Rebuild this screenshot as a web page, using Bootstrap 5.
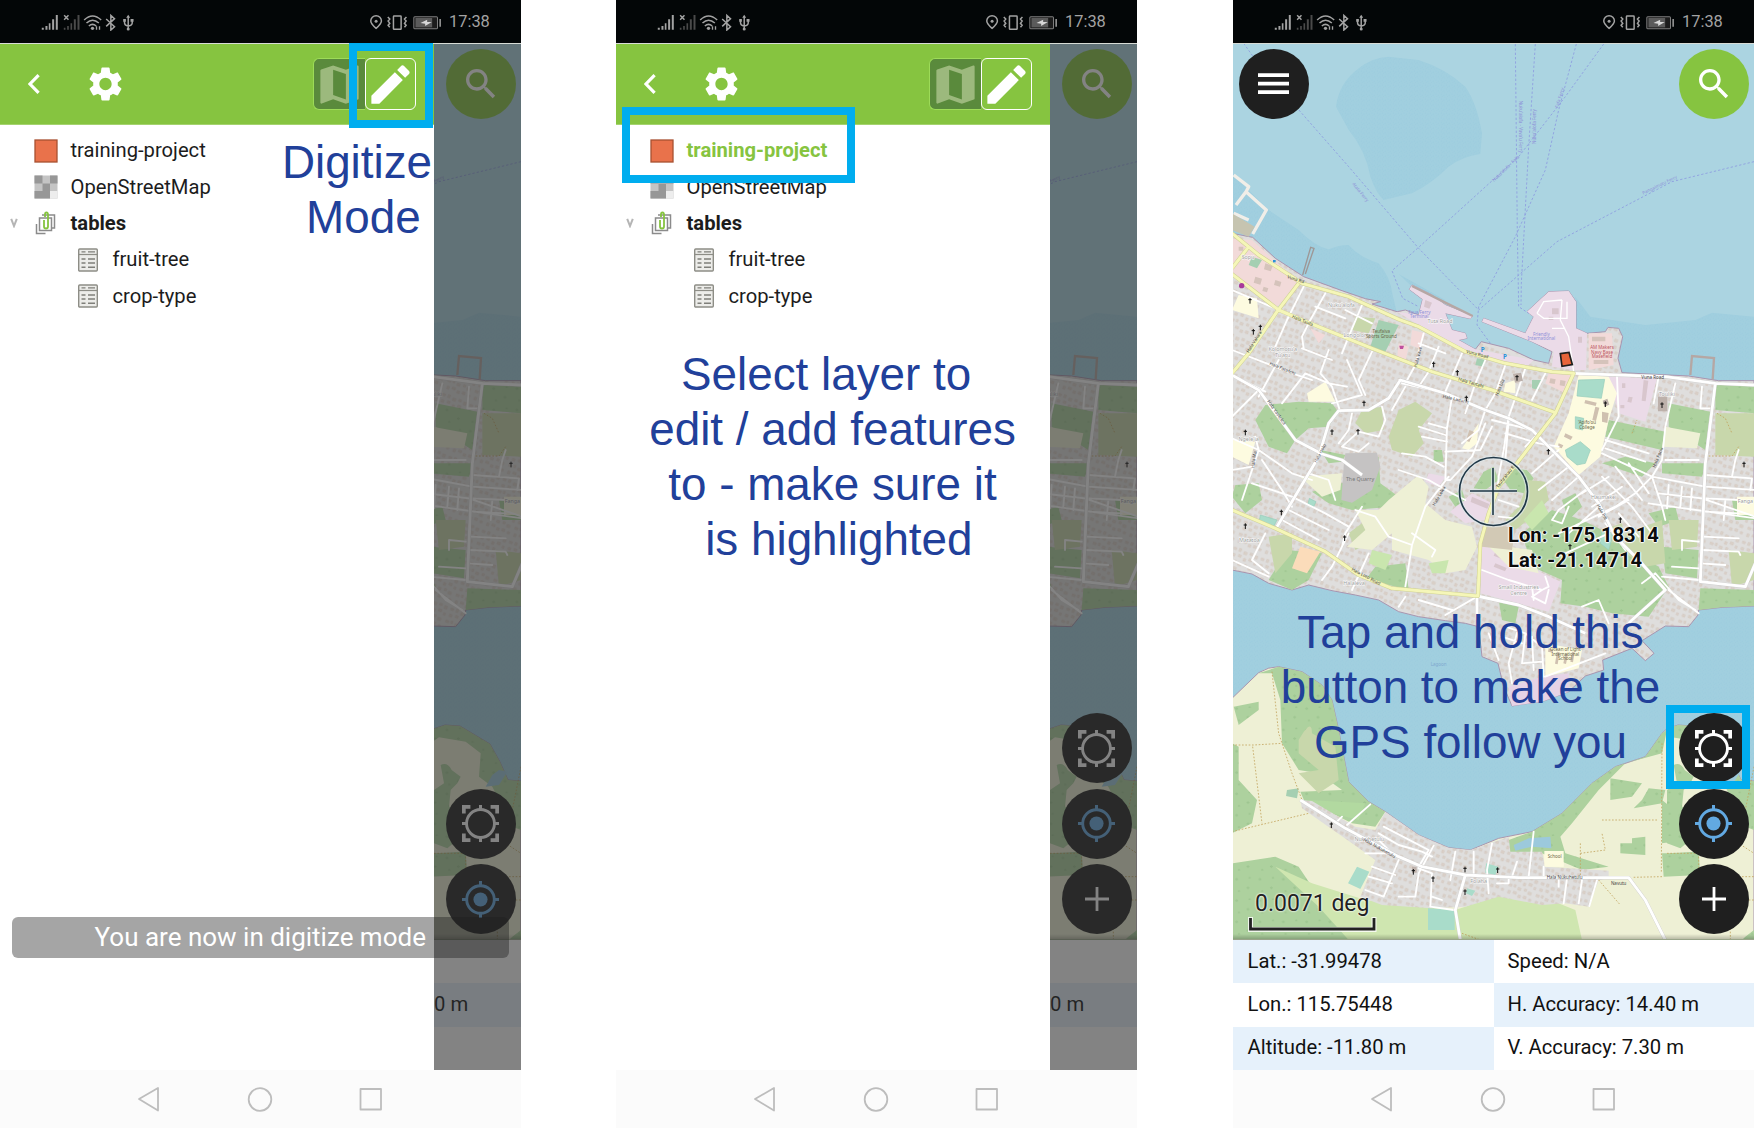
<!DOCTYPE html>
<html lang="en">
<head>
<meta charset="utf-8">
<meta name="viewport" content="width=device-width, initial-scale=1">
<title>Digitize mode guide</title>
<link href="https://cdn.jsdelivr.net/npm/bootstrap@5.3.0/dist/css/bootstrap.min.css" rel="stylesheet">
<style>
body{font-family:Roboto,"Liberation Sans",sans-serif;background:#fff;color:#1c1c1c;overflow:hidden}
.stage{width:1754px;height:1129px;gap:95px}
.phone{width:521px;height:1128px;flex:none}
.phone:last-child{margin-left:1px}
.statusbar{height:43px;background:#030607;color:#a3a3a3;padding:1px 33px 0 40px;flex:none;font-size:16.4px}
.statusbar .clock{width:39px;margin-left:6px;line-height:18px}
.screen{height:1027px;flex:none;border-top:1px solid #d8dcd6}
.drawer{width:434px;background:#fff;flex:none}
.drawer-head{height:81px;background:#86c440;border-bottom:1px solid #a5d36f;padding:0 18px 0 28px}
.gear{margin-left:45px}
.modes{width:103px;height:52px}
.mode-off{width:52px;background:#5a8a3c;border:1px solid #9ddb58;border-right:0;border-radius:6px 0 0 6px;color:#9cb97d}
.mode-on{width:51px;background:#86c440;border:1.5px solid #fff;border-radius:6px;color:#fff}
.tree{padding-top:7.5px;font-size:20.2px}
.tree-row{height:36.3px}
.tree-row span{padding-bottom:.5px;line-height:24px}
.caret{width:34px;padding-left:10px;flex:none}
.ico{width:24px;flex:none;margin-right:12.5px}
.child .ico{margin-left:42px}
.picked{color:#86c440;font-weight:700}
.strip{width:87px;flex:none;overflow:hidden}
.shade{inset:0;background:rgba(49,49,49,.6)}
.mapbox{height:896px;flex:none;overflow:hidden;border-bottom:1px solid #9aa58a}
.mapbox>svg{display:block}
.foot-shadow{left:0;right:0;bottom:0;height:5px;background:linear-gradient(rgba(0,0,0,0),rgba(0,0,0,.22))}
.fab{width:70px;height:70px;border-radius:50%;background:#1f1f1f}
.fab-go{background:#86c440}
.at-top{top:5px}
.at-right{right:5.5px}
.at-left{left:5.5px}
.fabs{bottom:5px;gap:5.4px}
.info{font-size:20.25px;color:#111;line-height:24px}
.info .cellx{height:43.4px;width:50%;padding:0 0 2px 14.5px;white-space:nowrap}
.info .cellx:last-child{padding-left:14px}
.tint{background:#e6f1fb}
.strip .info .cellx{width:100%;padding-left:0}
.navkeys{height:58px;background:#fbfbfb;flex:none}
.note{font-family:"Liberation Sans",Arial,sans-serif;font-size:45.8px;line-height:55px;color:#21409a;white-space:pre;text-align:center;z-index:5}
.frame{border:8.5px solid #00adef;z-index:4}
.n1{left:257px;width:200px;top:134.5px}
.n2{left:16px;width:401px;top:346.5px}
.n3{left:37px;width:401px;top:604.5px}
.f1{left:349px;top:43px;width:84px;height:85px}
.f2{left:6px;top:107px;width:233px;height:76px}
.f3{left:433px;top:705px;width:84px;height:84px}
.toastbar{left:11.5px;top:916.5px;width:497.5px;height:41px;border-radius:6px;background:rgba(29,29,29,.4);color:#fff;font-size:26px;line-height:41px;z-index:4;white-space:nowrap}
.coords{left:275px;top:479px;font-size:20.2px;font-weight:700;line-height:24.6px;color:#0b0b0b;text-shadow:0 0 2px #fff,1px 0 1px #fff,-1px 0 1px #fff,0 1px 1px #fff}
.scalelab{left:22px;top:847px;font-size:23px;line-height:26px;color:#222;text-shadow:0 0 2px #fff,0 0 2px #fff}
.scalebar{left:15px;top:871.5px}
.cross{left:224px;top:411px}
</style>
</head>
<body>

<svg width="0" height="0" class="position-absolute" aria-hidden="true">
<defs>
<pattern id="houses" width="88" height="84" patternUnits="userSpaceOnUse" patternTransform="rotate(22)">
<rect width="88" height="84" fill="#dfdedd"/>
<g fill="#dad0c8" stroke="#d0c3ba" stroke-width="1.2">
<path d="M5 6h9v7h-9zM22 4h7v9h-7zM38 8h10v8h-10zM57 5h8v7h-8zM73 7h9v9h-9zM8 25h8v8h-8zM26 22h9v7h-9zM44 27h7v9h-7zM60 22h10v8h-10zM78 28h6v7h-6zM4 45h10v7h-10zM20 42h6v8h-6zM34 46h9v8h-9zM53 43h7v7h-7zM67 47h10v8h-10zM9 65h7v9h-7zM25 62h10v7h-10zM42 67h8v8h-8zM58 64h9v8h-9zM76 66h7v7h-7z"/>
</g>
</pattern>
<pattern id="trees" width="70" height="64" patternUnits="userSpaceOnUse">
<rect width="70" height="64" fill="#add19e"/>
<path d="M10 14q4-7 8 0zM14 14v4M44 40q4-7 8 0zM48 40v4M50 10q3-5 6 0zM18 50q3-5 6 0z" fill="none" stroke="#93bd86" stroke-width="1.6"/>
</pattern>
<pattern id="ripple" width="16" height="14" patternUnits="userSpaceOnUse">
<rect width="16" height="14" fill="#a1cfdf"/>
<path d="M2 3h3M10 6h3M5 10h2M13 12h2" stroke="#93c5db" stroke-width="1.5"/>
</pattern>
<path id="ch" d="M0-8V9M-5-3H5" fill="none" stroke="#111" stroke-width="3"/>

<g id="tonga">
<rect x="0" y="128" width="1570" height="2700" fill="#abd4e1"/>
<g fill="url(#ripple)">
<path d="M380 205Q420 172 470 170L560 180Q640 205 700 260Q735 310 750 400L745 462Q690 470 650 500Q600 550 540 580L455 600Q432 580 415 530Q400 450 350 390L312 320Q320 250 380 205Z"/>
<path d="M0 520L110 630L200 690Q250 740 290 748Q320 735 350 735Q380 770 440 790Q475 830 482 885L500 960H0Z"/>
<path d="M500 822L640 900L590 920L540 860Z"/>
<path d="M1030 890L1075 950L1240 975L1390 960L1440 938L1566 950V1180H1030Z"/>
<path d="M0 1640H1570V2700H0Z"/>
</g>
<!-- main island -->
<path d="M0 700L62 712L130 775L215 830L330 872L400 896L446 905L420 912L495 935L520 930L560 945L572 898L532 868L540 855L600 885L640 915L722 948L715 956L640 940L660 990L700 1000L705 1015L680 1020L730 1048L748 1025L830 1045L905 1080L950 1090L960 1055L900 1025L750 965L755 955L880 1000L905 950L885 935L950 875L1010 873L1032 905L1032 985L1065 1000L1120 995L1128 982L1160 985L1172 1010L1158 1075L1170 1118L1370 1128L1460 1142L1566 1142V1818L1470 1822L1400 1830L1398 1845L1370 1880L1300 1878L1230 1922L1266 1960L1240 1982L1200 1945L1112 1980L1115 2010L1060 2028L1010 2075L930 2105L875 2112L840 2118L815 2060L798 1990L750 1970L740 1880L700 1870L640 1862L560 1850L500 1835L440 1800L370 1785L300 1772L230 1755L180 1770L110 1750L60 1722L0 1710Z" fill="url(#houses)" stroke="#a895b0" stroke-width="3"/>
<!-- southern shore -->
<path d="M0 2095L80 2018Q110 2000 140 2000L210 2015L270 2055L300 2100L320 2190L350 2345L410 2405L460 2435L560 2505L650 2543L715 2550L800 2515L900 2495L990 2440L1080 2350L1150 2300L1240 2270L1290 2200L1305 2186L1338 2175L1383 2178L1473 2232L1503 2286L1527 2340L1566 2343V2830H0Z" fill="#eef0d5" stroke="#a895b0" stroke-width="3"/>
<!-- waterfront districts -->
<g fill="#f2dad9"><path d="M0 715L60 720L205 850L130 925L0 820ZM540 990L580 1000L560 1045L535 1035ZM500 1030L530 1040L520 1085L495 1075ZM950 1120L1020 1125L1000 1180L940 1150ZM1070 1000L1140 1000L1145 1095L1070 1110ZM235 985L280 1005L260 1030Z"/></g>
<g fill="#d5c3bb"><path d="M20 740h14v12h-14zM100 790l22 8-6 16-20-6zM70 830l20 6-5 18-20-6zM130 840l18 6-4 14-18-5zM95 860l14 5-4 12-14-4zM40 850l10 4-4 9-10-3zM1080 1010h40v14h-40zM1085 1080h44v12h-44zM955 1135l16 3-3 14-16-3zM985 1140l16 3-3 16-15-3z"/></g>
<g fill="#ebdbe8">
<path d="M495 935L560 945L572 898L532 868L540 855L600 885L640 915L722 948L715 956L640 940L660 990L700 1000L705 1015L680 1020L730 1048L905 1080L880 1105L700 1050L560 975ZM885 935L950 875L1010 873L1032 905L1032 985L1065 1000L1062 1110L1030 1110L960 1100L965 1055L900 1025L750 965L755 955L880 1000L905 950Z"/>
<path d="M1130 1130L1275 1135L1240 1265L1160 1240ZM745 1630L985 1745L950 1835L745 1780ZM655 1535L720 1480L780 1510L760 1560L700 1570ZM590 1420L640 1430L620 1460L580 1445Z"/>
<path d="M830 2060L930 2030L1010 2020L1010 2075L930 2105L840 2118Z" fill="#e6d3e6"/>
</g>
<g fill="#d8c6cd"><path d="M1235 1140l14 2-8 62-12-2zM1170 1150h10v14h-10zM1190 1190l12 2-4 16-12-3zM1165 1215h12v10h-12zM720 1490l52 22-6 14-50-20zM790 1655l34 14-5 12-34-14zM790 1690l34 14-5 10-34-14zM960 925h20v18h-20zM580 900l20 8-8 18-16-6zM950 950h14v10h-14zM1038 1010h12v18h-12z"/></g>
<g fill="url(#trees)">
<path d="M100 1215L200 1205L300 1210L318 1235L290 1280L230 1285L190 1320L165 1360L110 1340L70 1260ZM10 1455L80 1450L90 1500L40 1540L0 1490ZM265 1350L340 1365L330 1385L290 1390ZM240 1475L330 1450L440 1370L445 1450L500 1490L480 1520L360 1530L290 1510ZM430 1700L520 1690L530 1770L450 1750L400 1740ZM755 1415L785 1400L800 1440L760 1470L725 1465ZM845 1405L885 1410L905 1435L875 1480L835 1470L815 1440ZM870 1600L960 1530L1050 1560L1130 1600L1180 1640L1280 1700L1310 1760L1250 1850L1140 1840L1060 1820L985 1810L990 1740L900 1700ZM1130 1260L1300 1295L1290 1350L1120 1310ZM1310 1210L1435 1235L1420 1350L1310 1280ZM1450 1155L1570 1155V1240L1450 1230ZM1180 1370L1270 1390L1230 1430L1110 1390ZM1290 1390L1420 1390L1410 1430L1290 1420ZM1290 1640L1400 1650L1395 1735L1300 1720ZM1405 1765L1570 1770V1818L1470 1822L1400 1830ZM1500 1500L1570 1500V1560L1510 1560ZM800 1800L860 1820L850 1870L810 1860ZM165 1650L270 1660L230 1740L180 1770L110 1740ZM990 1500L1030 1480L1050 1520L1010 1560ZM1250 1540L1330 1520L1340 1560L1280 1580ZM605 1350L630 1350L635 1385L605 1385ZM650 1490L690 1470L700 1500L670 1520Z"/>
</g>
<g fill="#c8d7ab">
<path d="M390 1230L450 1220L455 1290L400 1300L370 1270ZM500 1230L550 1205L600 1240L560 1290L575 1330L540 1370L480 1350L470 1310ZM370 950L430 955L410 1000L360 990ZM890 1440L940 1445L950 1500L900 1550L850 1590L820 1560L860 1520ZM1180 1600L1290 1560L1300 1690L1240 1700L1180 1660ZM1450 1240L1566 1240V1370L1450 1365ZM1110 1590L1170 1570L1180 1620L1130 1630ZM1490 1650L1566 1660V1740L1500 1760ZM1310 1560L1400 1560L1395 1640L1320 1650ZM110 1610L180 1600L180 1660L130 1720ZM350 1600L390 1570L450 1610L370 1650Z"/>
</g>
<g fill="#eef0d5">
<path d="M205 1430L330 1420L325 1470L270 1490ZM470 1500L560 1425L590 1460L580 1510L640 1560L720 1580L735 1640L700 1710L640 1720L590 1680L480 1650L480 1600L420 1650L345 1640L400 1590L370 1530L440 1530ZM1300 1280L1405 1300L1395 1345L1290 1340ZM760 1630L900 1650L920 1720L830 1700Z"/>
</g>
<g fill="#fdfbe0">
<path d="M20 885L75 895L80 955L0 930ZM280 1145L310 1205L230 1205L225 1180ZM690 1345L740 1270L735 1330L710 1350ZM1040 1125L1130 1130L1155 1180L1130 1260L1105 1370L1040 1425L965 1340L1010 1240ZM0 1320L70 1325L50 1395L0 1370ZM940 1930L1050 1950L1040 2005L940 2030ZM820 1150L850 1140L850 1180L815 1175ZM937 2555L995 2555L995 2600L937 2600ZM1515 1490H1566V1545H1515Z"/>
</g>
<g fill="#cfc0b0"><path d="M1090 1220l12 3-10 40-11-3zM1060 1200l34 8-3 10-34-8zM1000 1300l22 10-6 10-20-10zM1110 1235l20 4-4 30-16-4zM980 1330l14 6-5 9-12-5zM975 1955l8 2-6 36-8-2zM1000 1960l8 2-6 30-8-2zM1020 1955l8 2-5 30-8-2zM950 1945l14 3-2 10-14-3zM712 1290l14 6-14 30-10-4z"/></g>
<path d="M340 1360L435 1358L445 1400L420 1470L360 1508L328 1500L335 1400Z" fill="#c5c3c3"/>
<path d="M205 1640L265 1655L225 1720L180 1705Z" fill="#fbdcba"/>
<path d="M755 1570L850 1585L840 1650L750 1640Z" fill="#d2c9b5"/>
<g fill="#a9dcca" stroke="#95ccb9" stroke-width="2"><path d="M1040 1140L1118 1138L1108 1195L1035 1188ZM1000 1350L1045 1325L1075 1350L1060 1390L1035 1395L1005 1370ZM85 1545L135 1560L125 1580L82 1565ZM232 1495L252 1505L245 1520L228 1512ZM1110 1590L1145 1600L1130 1650L1105 1630ZM1030 1250L1055 1255L1052 1290L1030 1285Z"/></g>
<g fill="#a5cfb2"><path d="M440 960L500 975L460 1055L415 1040ZM900 1140L930 1140L920 1170L900 1165ZM735 1075L760 1080L755 1100L730 1095ZM60 770L90 780L75 805L50 795Z"/></g>
<g fill="#c9e6ae"><path d="M420 1650L480 1665L460 1710L410 1690ZM875 1560L930 1500L950 1540L900 1590ZM590 1690L650 1680L640 1720L600 1720Z"/></g>
<!-- southern woodland and villages -->
<g fill="url(#trees)">
<path d="M80 2020L140 2000L210 2015L270 2055L300 2100L320 2190L350 2345L410 2405L460 2435L430 2480L360 2470L300 2440L220 2410L205 2375L330 2370L260 2320L200 2310L150 2230L145 2100L120 2020ZM5 2120L80 2105L80 2130L20 2175ZM0 2230L20 2240L20 2340L75 2400L60 2470L0 2500ZM0 2590L130 2570L200 2600L240 2660L330 2700L400 2820H0ZM900 2495L990 2440L1080 2350L1150 2300L1240 2270L1290 2200L1305 2190L1290 2260L1180 2290L1100 2370L1020 2470L985 2510L1000 2560L1130 2600L1050 2610L930 2560L830 2560L830 2520ZM1135 2335L1230 2350L1200 2390L1135 2400ZM1250 2365L1300 2370L1290 2410L1205 2425L1230 2400ZM1165 2530L1200 2530V2515L1240 2510V2565L1165 2560ZM1290 2560L1400 2558L1405 2625L1295 2630ZM1290 2400L1340 2440L1360 2520L1290 2530ZM1305 2186L1338 2175L1383 2178L1473 2232L1503 2286L1527 2340L1566 2343V2490L1540 2480L1480 2360L1440 2330L1445 2260L1400 2225L1320 2212L1305 2222ZM1325 2295Q1345 2285 1358 2310L1385 2330L1375 2350L1355 2370L1350 2420L1440 2440L1400 2500L1345 2545L1305 2530V2515L1350 2490L1330 2445L1305 2440V2370L1335 2350ZM1305 2560L1400 2555V2625L1305 2625ZM1540 2810L1566 2790V2820H1530ZM480 2790L550 2790L550 2815L490 2815Z"/>
</g>
<path d="M200 2220Q240 2150 240 2200L310 2240L320 2340L260 2380L200 2320L260 2310L200 2260Z" fill="#c8d7ab"/>
<path d="M230 2400L400 2410L380 2460L300 2440Z" fill="#b2d9a0"/>
<path d="M130 2600L240 2650L400 2700L560 2720L670 2730L700 2720L800 2680L930 2690L1030 2730L1050 2820H350L260 2720Z" fill="#cfe6b0"/>
<path d="M205 2400L240 2403L370 2480L430 2490L460 2435L560 2505L650 2543L715 2550L830 2510L835 2555L930 2555L940 2600L1130 2612L1130 2635L1100 2640L1070 2720L1000 2710L930 2715L800 2690L700 2720L600 2725L450 2715L385 2690L430 2580L360 2530L210 2425Z" fill="url(#houses)"/>
<path d="M937 2553H995V2600H937Z" fill="#fdfbe0"/>
<g fill="#a9dcca"><path d="M375 2600L412 2615L385 2667L348 2650ZM588 2725L668 2730V2790H588ZM762 2590L800 2600L790 2625L760 2618ZM705 2665L730 2672L720 2688L702 2680Z"/></g>
<g fill="#9cc9dc"><path d="M845 2535L890 2515L955 2510L958 2545L900 2540L850 2552ZM1480 2325L1500 2310L1525 2315L1500 2355L1460 2360Z"/></g>
<path d="M165 2370L200 2365L195 2395L162 2388Z" fill="#a5cfb2"/>
<!-- sea walls -->
<g fill="none" stroke="#f1eee8" stroke-width="10" stroke-linejoin="round"><path d="M5 525L50 560L42 575L103 630L62 702M42 575L12 615M5 640L50 660"/></g>
<path d="M0 640L68 680L50 710L0 690Z" fill="#c6c4b0"/>
<g fill="none" stroke="#b5a7a4" stroke-width="7"><path d="M540 858L640 908L722 948M1375 1125L1380 1068L1446 1074L1442 1138"/></g>
<path d="M212 825L236 742L246 745L220 822" fill="none" stroke="#9d9796" stroke-width="4"/>
<!-- minor streets -->
<g fill="none" stroke="#fff" stroke-width="5.5" stroke-linejoin="round" stroke-linecap="round">
<path d="M45 745L5 800M0 870L130 925M215 860L165 960L130 1040M280 880L235 960L210 1010L215 1045M390 915L350 1010L330 1060M250 920L340 955M340 930L420 970M210 1045L300 1080M0 1050L180 1120L240 1140M80 1190L140 1080M150 1210L220 1120L290 1150L345 1160M0 1125L100 1175M0 1250L80 1170M290 1050L265 1120L300 1160L325 1235M345 1080L390 1185L300 1210M420 1055L380 1140L400 1185M575 1000L550 1095L520 1150L500 1140M620 1040L590 1115L560 1160M690 1060L660 1130L640 1175M760 1080L730 1150L700 1240M820 1095L790 1180L760 1230L740 1290L690 1330M880 1105L855 1180L830 1250L815 1350L800 1430L795 1480M940 1120L900 1200M560 1030L640 1060M510 1150L620 1175M480 1230L520 1160M590 1270L645 1285L660 1190M560 1280L640 1305M570 1310L645 1325M645 1280L640 1440L655 1440L720 1370L760 1270M500 1410L590 1440L660 1480L700 1500M510 1360L580 1370L635 1400M640 1355L745 1350L780 1280M830 1260L820 1380L860 1400M780 1260L900 1290M820 1300L920 1330L980 1340M450 1220L460 1260L440 1310L380 1295L330 1340L380 1355L410 1330M360 1240L350 1290L320 1330M230 1420L290 1440L310 1500M30 1500L80 1350L70 1310M0 1315L80 1350L180 1420L240 1440M90 1380L150 1470L180 1520M0 1410L60 1400M60 1450L180 1490L280 1540L350 1580M170 1530L290 1590M150 1560L260 1620M100 1600L60 1680L110 1720M0 1680L110 1730M390 1520L340 1600L330 1640M370 1530L430 1550L470 1610L540 1635L580 1520L650 1430M540 1635L520 1760M540 1600L610 1650L600 1670M350 1600L300 1700L270 1740M410 1660L360 1770M800 1500L860 1520M800 1550L850 1555"/>
<path d="M930 1290L880 1340M980 1350L900 1420M1010 1400L920 1470M1040 1430L960 1500M1060 1470L980 1530L960 1560L990 1570L1010 1520M1100 1520L1010 1600M1130 1600L1000 1660M980 1600L1150 1520L1210 1480L1260 1430L1110 1360M1110 1430L1200 1520L1260 1600M1150 1400L1230 1500M1190 1390L1250 1480M1050 1480L1130 1430M1080 1520L1170 1460M1100 1550L1190 1500M1160 1540L1220 1610M1120 1570L1180 1650M1330 1150L1300 1280L1290 1380L1260 1430L1290 1520L1300 1560M1155 1130L1160 1250L1110 1350M1120 1320L1250 1360M1120 1345L1240 1385M1280 1130L1265 1210M1410 1160L1405 1225L1440 1225M1300 1380L1400 1380M1260 1430L1420 1460L1570 1470M1280 1480L1410 1495L1570 1550M1350 1460L1345 1520M1380 1465L1375 1530M1310 1455L1305 1525M1250 1510L1570 1555M1420 1495L1520 1500M1420 1535L1520 1540M1420 1425L1560 1435L1555 1470M1500 1430L1510 1380L1520 1350M1480 1500L1475 1560M1415 1610L1520 1615M1410 1650L1520 1655L1525 1665M1350 1650L1350 1620L1400 1625M1320 1700L1400 1705M1290 1730L1400 1740M1406 1690L1480 1695"/>
<path d="M750 1710L830 1740L930 1770L950 1760L940 1730M930 1770L900 1790L940 1810L950 1770M900 1760L905 1800M640 1845L735 1790M560 1800L660 1830M520 1790L500 1820M1230 1750L1270 1720L1340 1800L1390 1830M1050 1820L1100 1800L1130 1870M820 1880L880 1900L930 1940L935 2030M860 1880L830 1990L840 2050M880 1900L870 1990L930 1985M770 1900L800 1980M940 2030L1120 1960M900 1910L905 2010M810 1910L870 1930M1310 1770L1400 1840"/>
<path d="M345 2475L415 2413M315 2465L330 2450M440 2500L500 2535L570 2555L600 2570M455 2480L590 2550L560 2600M400 2560L480 2560L440 2520M605 2537L560 2620L550 2690L500 2690M670 2555L655 2640M725 2555L725 2620M780 2530L765 2610L770 2680M905 2495L890 2630M855 2585L840 2630M935 2600V2630M1005 2635L995 2710M1050 2640L1040 2710M1095 2640L1072 2718M420 2600L490 2625M410 2630L480 2650M400 2670L455 2690L500 2580M560 2605L600 2620L595 2720L665 2730M600 2690L630 2700M980 2635V2660M830 2630V2650H795"/>
</g>
<!-- white through-roads -->
<path d="M0 1125L80 1170L190 1320L270 1362L330 1380L390 1425M135 1580L260 1370L290 1270L320 1232L410 1230L470 1195L505 1140L640 1180L760 1230L830 1255L900 1290L960 1350L1040 1430L1100 1510L1150 1610L1220 1680L1300 1770L1200 1860L1180 1880M1025 1120L1300 1130L1450 1150L1566 1155M1450 1150L1420 1390L1405 1745L1540 1760L1570 1690M735 1788L860 1815L950 1850L1060 1900M735 1788L735 1860M205 2400L340 2485L500 2570L570 2600L700 2625L860 2633H1190L1240 2700L1300 2820M700 2625L670 2730L685 2820" fill="none" stroke="#cfcfcf" stroke-width="10.5" stroke-linejoin="round"/>
<path d="M0 1125L80 1170L190 1320L270 1362L330 1380L390 1425M135 1580L260 1370L290 1270L320 1232L410 1230L470 1195L505 1140L640 1180L760 1230L830 1255L900 1290L960 1350L1040 1430L1100 1510L1150 1610L1220 1680L1300 1770L1200 1860L1180 1880M1025 1120L1300 1130L1450 1150L1566 1155M1450 1150L1420 1390L1405 1745L1540 1760L1570 1690M735 1788L860 1815L950 1850L1060 1900M735 1788L735 1860M205 2400L340 2485L500 2570L570 2600L700 2625L860 2633H1190L1240 2700L1300 2820M700 2625L670 2730L685 2820" fill="none" stroke="#fff" stroke-width="8.5" stroke-linejoin="round"/>
<path d="M915 940L935 905L990 900M915 940L935 955H1005V905M990 900L985 960L1010 1010L1025 1115M960 985L1000 985" fill="none" stroke="#fff" stroke-width="4"/>
<!-- yellow main roads -->
<g fill="none" stroke-linejoin="round">
<path d="M0 700L80 765L210 850L350 890L500 958L560 980L700 1055L820 1090L960 1115L1025 1120L970 1240L870 1370L800 1460L770 1540L745 1630L738 1788L480 1765L380 1725L280 1655L130 1585L0 1530M0 822L140 930L210 960L420 1045L600 1115L780 1170L970 1238M200 850L135 935L50 1060L0 1120M50 740L0 805" stroke="#cfd193" stroke-width="12"/>
<path d="M0 700L80 765L210 850L350 890L500 958L560 980L700 1055L820 1090L960 1115L1025 1120L970 1240L870 1370L800 1460L770 1540L745 1630L738 1788L480 1765L380 1725L280 1655L130 1585L0 1530M0 822L140 930L210 960L420 1045L600 1115L780 1170L970 1238M200 850L135 935L50 1060L0 1120M50 740L0 805" stroke="#f5f6b8" stroke-width="9"/>
</g>
<!-- tracks -->
<g fill="none" stroke="#c2a25a" stroke-width="2.4" stroke-dasharray="5 5"><path d="M120 2015L140 2200L180 2320L210 2400M0 2235H65L150 2230M62 2240L90 2470M0 2495L230 2440M1290 2230L1288 2620M1290 2630L1200 2632M1045 2530V2630M1045 2560L1120 2550L1110 2500M1110 2460L1280 2460M1400 2560V2630H1566M1305 2560H1400M1566 2300L1520 2530L1566 2560M1100 2640L1165 2715M1495 2820V2700M1530 2700H1566M690 2800L745 2820M1455 1240L1480 1255L1500 1300M1430 1368H1500L1520 1340M1200 1300L1215 1260"/></g>
<!-- ferry lines -->
<g fill="none" stroke="#8d9de0" stroke-width="2.6" stroke-dasharray="7 6">
<path d="M35 130L60 165L205 335L350 500L560 745L740 930M850 132L856 700L860 920L890 940M910 132L890 440L868 850L867 915M1033 132L980 330L940 510L850 710L740 920L735 975L775 1030M1115 132L1000 290L860 470L560 742L480 812L512 895L560 920M1566 485L1320 545L975 725L740 930"/>
</g>
<g fill="#8e90d8" font-family="Noto Sans" font-size="13.5">
<text transform="translate(360 552) rotate(51)">Atata Ferry</text>
<text transform="translate(862 302) rotate(90)">Nuku'alofa - Vava'u Ferry</text>
<text transform="translate(913 432) rotate(-90)">Nuku'alofa Ferry</text>
<text transform="translate(978 325) rotate(-73)">Fafa Ferry</text>
<text transform="translate(786 546) rotate(-44)">Nuku'alofa - Fafa</text>
<text transform="translate(1234 584) rotate(-26)">Pangaimotu Ferry</text>
<g text-anchor="middle"><text x="562" y="942">Faua Ferry</text><text x="562" y="955">Terminal</text><text x="928" y="1008">Friendly</text><text x="928" y="1021">International</text><text x="620" y="1998" fill="#7fa9cf">Lagoon</text></g>
</g>
<g fill="#9a9a9a" stroke="#fff" stroke-width="2.5" paint-order="stroke" font-family="Noto Sans" font-size="16" text-anchor="middle">
<text x="48" y="776">Sopu</text><text x="328" y="922">Nuku'alofa</text><text x="152" y="1053">Kolomotu'a</text><text x="152" y="1070">Tu'atu</text><text x="380" y="1012">Longolongo</text><text x="624" y="968">Tuta Road</text><text x="50" y="1322">Ngele'ia</text><text x="384" y="1442" fill="#777" stroke="none">The Quarry</text><text x="1115" y="1497">Haumakei</text><text x="1305" y="1187">Touliki</text><text x="52" y="1626">Matatoa</text><text x="366" y="1755">Halaleva</text><text x="1540" y="1510">Fanga</text><text x="860" y="1768">Small Industries</text><text x="860" y="1785">Centre</text><text x="412" y="2522">Nukuhetulu</text><text x="740" y="2650">Folaha</text>
</g>
<g fill="#6b6746" font-family="Noto Sans" font-size="13.5" text-anchor="middle">
<text x="1065" y="1273">'Apifo'ou</text><text x="1065" y="1286">College</text><text x="1000" y="1953">Ocean of Light</text><text x="1000" y="1967">International</text><text x="1000" y="1981">School</text><text x="448" y="1000">Teufaiva</text><text x="448" y="1013">Sports Ground</text><text x="968" y="2575">School</text>
<g fill="#bb5560"><text x="1110" y="1047">AM Makers</text><text x="1110" y="1061">Navy Base</text><text x="1110" y="1075">Masefield</text></g>
<g fill="#444"><text x="1262" y="1137">Vuna Road</text><text x="998" y="2637">Hala Nukuhetulu</text><text x="1160" y="2655">Navutu</text>
<text transform="translate(735 1067) rotate(14)">Vuna Road</text><text transform="translate(716 1152) rotate(17)">Hala Tautahi</text><text transform="translate(670 1202) rotate(13)">Hala Laifone</text><text transform="translate(210 966) rotate(22)">Hala Taufa</text><text transform="translate(70 1028) rotate(-57)">Hala Vaha'a</text><text transform="translate(150 1110) rotate(22)">Hala Fatafehi</text><text transform="translate(130 1240) rotate(55)">Hala Vaololoa</text><text transform="translate(268 1362) rotate(-62)">Hala Holo</text><text transform="translate(826 1430) rotate(-52)">Taufa'ahau Rd</text><text transform="translate(625 1490) rotate(-60)">Hala Lelea</text><text transform="translate(1106 1538) rotate(60)">Hala Pili</text><text transform="translate(400 1733) rotate(28)">Hala Loto Road</text><text transform="translate(440 2548) rotate(29)">Hala Nukuhetulu</text><text transform="translate(562 1072) rotate(-75)">Hala Vave</text><text transform="translate(808 1164) rotate(-68)">Hala Ula</text><text transform="translate(1282 1374) rotate(-68)">Hala Fonu</text><text transform="translate(70 1380) rotate(-82)">Hala Ma</text><text transform="translate(190 842) rotate(18)">Vuna Rd</text></g>
</g>
<g fill="#2a93d8" font-family="Noto Sans" font-size="19" font-weight="700"><text x="746" y="1057">P</text><text x="813" y="1077">P</text></g>
<circle cx="29" cy="857" r="8" fill="#a83a9a"/><path d="M502 1037h14l-3 10h-9z" fill="#c0509f"/><path d="M123 780h8v7h-8z" fill="#2a93d8"/>
<path d="M843 1122l24-4 6 24-24 6zM1112 1202l14-6 6 18-14 6zM540 2600h14v18h-14zM1278 1190h28v44h-28z" fill="#bdb1ab"/>
<g><use href="#ch" x="54" y="902"/><use href="#ch" x="85" y="982"/><use href="#ch" x="64" y="995"/><use href="#ch" x="605" y="1093"/><use href="#ch" x="676" y="1118"/><use href="#ch" x="855" y="1133"/><use href="#ch" x="703" y="1195"/><use href="#ch" x="396" y="1210"/><use href="#ch" x="1120" y="1212"/><use href="#ch" x="1290" y="1215"/><use href="#ch" x="40" y="1297"/><use href="#ch" x="300" y="1296"/><use href="#ch" x="378" y="1295"/><use href="#ch" x="949" y="1355"/><use href="#ch" x="1536" y="1393"/><use href="#ch" x="148" y="1537"/><use href="#ch" x="40" y="1578"/><use href="#ch" x="338" y="1614"/><use href="#ch" x="1165" y="1560"/><use href="#ch" x="1014" y="1640"/><use href="#ch" x="298" y="2475"/><use href="#ch" x="544" y="2615"/><use href="#ch" x="603" y="2637"/><use href="#ch" x="699" y="2608"/><use href="#ch" x="797" y="2610"/><use href="#ch" x="699" y="2676"/></g>
<path d="M985 1061L1011 1057L1021 1094L990 1099Z" fill="#e8643a" stroke="#20201f" stroke-width="5"/>
</g>

<symbol id="i-left" viewBox="120 36 284 56">
<g fill="#a3a3a3"><path d="M125 80h6v6h-6zM136 75h6v11h-6zM146 67h5v19h-5zM156 55h6v31h-6zM167 42h6v44h-6z"/></g>
<g fill="#4a4a4a"><path d="M191 80h5v6h-5zM201 75h5v11h-5zM211 67h5v19h-5zM221 55h6v31h-6zM232 42h6v44h-6z"/></g>
<g fill="none" stroke="#a3a3a3" stroke-width="4.500"><path d="M192 43l13 13M205 43l-13 13M252 57Q277 33 303 57M259 66Q277 49 296 66M266 75Q277 65 288 75" /><path d="M318 54L343 77L332 87V43L343 53L318 76M384 46V84M373 58V66Q373 73 384 75Q396 73 396 66V58"/></g>
<circle cx="277" cy="82" r="5" fill="#a3a3a3"/><path d="M289 76v10M298 76v10" stroke="#a3a3a3" stroke-width="4"/><path d="M378 50l6-9 6 9zM369 54h8v8h-8zM391 54h9v8h-9z" fill="#a3a3a3"/><circle cx="384" cy="84" r="4.500" fill="#a3a3a3"/>
</symbol>
<symbol id="i-right" viewBox="1108 36 220 56">
<g fill="none" stroke="#a3a3a3" stroke-width="4.500"><path d="M1129 82Q1113 68 1113 60A16 16 0 0 1 1145 60Q1145 68 1129 82Z"/><rect x="1181" y="45" width="23" height="40" rx="2"/><path d="M1164 48l6 6-5 6 5 7-5 6 5 6M1220 48l-6 6 5 6-5 7 5 6-5 6"/></g><path d="M1321 54V77" stroke="#8d8d8d" stroke-width="5"/><rect x="1242" y="47" width="71" height="36" rx="3" fill="#1c1c1c" stroke="#7d7d7d" stroke-width="3"/>
<circle cx="1129" cy="61" r="4.500" fill="#a3a3a3"/><rect x="1247" y="51" width="50" height="28" fill="#5b5b5b"/><path d="M1262 66L1282 56V63H1296L1276 75V68Z" fill="#d8d8d8"/>
</symbol>
<symbol id="i-gear" viewBox="0 0 24 24"><path fill="#fff" d="M19.14 12.94c.04-.3.06-.61.06-.94 0-.32-.02-.64-.07-.94l2.03-1.58c.18-.14.23-.41.12-.61l-1.92-3.32c-.12-.22-.37-.29-.59-.22l-2.39.96c-.5-.38-1.03-.7-1.62-.94l-.36-2.54c-.04-.24-.24-.41-.48-.41h-3.84c-.24 0-.43.17-.47.41l-.36 2.54c-.59.24-1.13.57-1.62.94l-2.39-.96c-.22-.08-.47 0-.59.22L2.74 8.87c-.12.21-.08.47.12.61l2.03 1.58c-.05.3-.09.63-.09.94s.02.64.07.94l-2.03 1.58c-.18.14-.23.41-.12.61l1.92 3.32c.12.22.37.29.59.22l2.39-.96c.5.38 1.03.7 1.62.94l.36 2.54c.05.24.24.41.48.41h3.84c.24 0 .44-.17.47-.41l.36-2.54c.59-.24 1.13-.56 1.62-.94l2.39.96c.22.08.47 0 .59-.22l1.92-3.32c.12-.22.07-.47-.12-.61l-2.01-1.58zM12 15.6c-1.98 0-3.6-1.62-3.6-3.6s1.62-3.6 3.6-3.6 3.6 1.62 3.6 3.6-1.62 3.6-3.6 3.6z"/></symbol>
<symbol id="i-map" viewBox="0 0 24 24"><path fill="currentColor" d="M20.5 3l-.16.03L15 5.1 9 3 3.36 4.9c-.21.07-.36.25-.36.48V20.5c0 .28.22.5.5.5l.16-.03L9 18.9l6 2.1 5.64-1.9c.21-.07.36-.25.36-.48V3.5c0-.28-.22-.5-.5-.5zM15 19l-6-2.11V5l6 2.11V19z"/></symbol>
<symbol id="i-pen" viewBox="0 0 24 24"><path fill="currentColor" d="M3 17.25V21h3.75L17.81 9.94l-3.75-3.75L3 17.25zM20.71 7.04c.39-.39.39-1.02 0-1.41l-2.34-2.34c-.39-.39-1.02-.39-1.41 0l-1.83 1.83 3.75 3.75 1.83-1.83z"/></symbol>
<symbol id="i-search" viewBox="0 0 24 24"><path fill="#fff" d="M15.5 14h-.79l-.28-.27C15.41 12.59 16 11.11 16 9.5 16 5.91 13.09 3 9.5 3S3 5.91 3 9.5 5.91 16 9.5 16c1.61 0 3.09-.59 4.23-1.57l.27.28v.79l5 4.99L20.49 19l-4.99-5zm-6 0C7.01 14 5 11.99 5 9.5S7.01 5 9.5 5 14 7.01 14 9.5 11.99 14 9.5 14z"/></symbol>
<symbol id="i-back" viewBox="0 0 12 20"><path d="M10.6 1.2L2 10l8.6 8.8" fill="none" stroke="#fff" stroke-width="3.2"/></symbol>
<symbol id="i-frame" viewBox="0 0 110 110"><g fill="none" stroke="#fff"><circle cx="55" cy="55" r="41.500" stroke-width="8.500"/><path d="M55 0v14M55 96v14M0 55h14M96 55h14" stroke-width="9"/><path d="M5.500 25V5.500H25M85 5.500H104.500V25M104.500 85V104.500H85M25 104.500H5.500V85" stroke-width="11"/></g></symbol>
<symbol id="i-gps" viewBox="0 0 110 110"><g fill="none" stroke="#62a9e2"><circle cx="55" cy="55" r="41" stroke-width="8.500"/><path d="M55 0v14M55 96v14M0 55h14M96 55h14" stroke-width="9"/></g><circle cx="55" cy="55" r="21" fill="#62a9e2"/></symbol>
<symbol id="i-plus" viewBox="0 0 24 24"><path d="M12 0V24M0 12H24" stroke="#fff" stroke-width="2.800"/></symbol>
<symbol id="i-poly" viewBox="0 0 24 24"><rect x="1" y="1" width="22" height="22" fill="#e9724b" stroke="#a85031" stroke-width="1.300"/></symbol>
<symbol id="i-raster" viewBox="0 0 24 24"><rect x=".5" y=".5" width="23" height="23" fill="#c4c4c4"/><path d="M.5.5h8v8h-8zM16 .5h7.500v8H16zM8.500 8.500H16V16H8.500zM.5 16H16v7.500H.5z" fill="#979797"/><path d="M16 16h7.500v7.500H16z" fill="#ededed"/></symbol>
<symbol id="i-group" viewBox="0 0 24 24"><g fill="#fff" stroke="#8b8b8b" stroke-width="1.500"><path d="M2.500 13V22.500H11.500M8 4H20.500V17H18" fill="none"/><rect x="5.500" y="7" width="12" height="12.500"/></g><path d="M10 9V15.500Q10 17.500 12 17.500T14 15.500V3.500Q14 1.500 12.500 1.500T11 3.500V6" fill="none" stroke="#86c440" stroke-width="1.800"/></symbol>
<symbol id="i-table" viewBox="0 0 24 24"><rect x="2.700" y="1" width="18.600" height="22" rx="1" fill="#ecece9" stroke="#8d8d86" stroke-width="1.400"/><path d="M3 6.500H21" stroke="#8d8d86" stroke-width="1.200"/><path d="M5.500 3.900h4M12 3.900h7M5.500 11h4M12 11h7M5.500 15h4M12 15h7M5.500 19.200h4M12 19.200h7" stroke="#7f7f7a" stroke-width="1.400"/></symbol>
<symbol id="i-caret" viewBox="0 0 8 10"><path d="M1.200 .8L4 8L6.800 .8" fill="none" stroke="#b5b5b5" stroke-width="2"/></symbol>
<symbol id="i-keys" viewBox="0 0 521 58"><g fill="none" stroke="#bdbdbd" stroke-width="1.800" stroke-linejoin="round"><path d="M139 29L158 18V40.500Z"/><circle cx="260" cy="29.500" r="11.300"/><rect x="360.500" y="19" width="20.500" height="20.500"/></g></symbol>
</defs>
</svg>

<main class="stage d-flex align-items-start">

<section class="phone position-relative d-flex flex-column">
  <header class="statusbar d-flex align-items-center">
    <svg width="95" height="18.700"><use href="#i-left"/></svg>
    <svg class="ms-auto" width="73.600" height="18.700"><use href="#i-right"/></svg><span class="clock">17:38</span>
  </header>
  <div class="screen d-flex">
    <div class="drawer">
      <div class="drawer-head d-flex align-items-center">
        <svg width="12" height="20"><use href="#i-back"/></svg>
        <svg class="gear" width="41" height="42"><use href="#i-gear"/></svg>
        <div class="modes ms-auto d-flex">
          <div class="mode-off d-flex align-items-center justify-content-center"><svg class="flex-shrink-0" width="51" height="51"><use href="#i-map"/></svg></div>
          <div class="mode-on d-flex align-items-center justify-content-center"><svg class="flex-shrink-0" width="51" height="51"><use href="#i-pen"/></svg></div>
        </div>
      </div>
      <div class="tree">
        <div class="tree-row d-flex align-items-center"><div class="caret"></div><svg class="ico" height="24"><use href="#i-poly"/></svg><span>training-project</span></div>
        <div class="tree-row d-flex align-items-center"><div class="caret"></div><svg class="ico" height="24"><use href="#i-raster"/></svg><span>OpenStreetMap</span></div>
        <div class="tree-row d-flex align-items-center"><div class="caret d-flex"><svg width="8" height="10"><use href="#i-caret"/></svg></div><svg class="ico" height="24"><use href="#i-group"/></svg><span class="fw-bold">tables</span></div>
        <div class="tree-row child d-flex align-items-center"><div class="caret"></div><svg class="ico" height="24"><use href="#i-table"/></svg><span>fruit-tree</span></div>
        <div class="tree-row child d-flex align-items-center"><div class="caret"></div><svg class="ico" height="24"><use href="#i-table"/></svg><span>crop-type</span></div>
      </div>
    </div>
    <div class="strip position-relative">
      <div class="mapbox position-relative">
        <svg width="87" height="896" viewBox="1305 132 261 2688"><use href="#tonga"/></svg>
        <div class="foot-shadow position-absolute"></div>
        <div class="fab fab-go position-absolute at-top at-right d-flex align-items-center justify-content-center"><svg width="40" height="40"><use href="#i-search"/></svg></div>
        <div class="fabs position-absolute at-right d-flex flex-column">
          <div class="fab d-flex align-items-center justify-content-center"><svg width="37" height="37"><use href="#i-frame"/></svg></div>
          <div class="fab d-flex align-items-center justify-content-center"><svg width="37" height="37"><use href="#i-gps"/></svg></div>
        </div>
      </div>
      <div class="info bg-white"><div class="cellx"></div><div class="cellx tint d-flex align-items-center"><span>0 m</span></div><div class="cellx"></div></div>
      <div class="shade position-absolute"></div>
    </div>
  </div>
  <footer class="navkeys"><svg width="521" height="58"><use href="#i-keys"/></svg></footer>
  <div class="frame f1 position-absolute"></div>
  <div class="note n1 position-absolute">Digitize
 Mode</div>
  <div class="toastbar position-absolute text-center">You are now in digitize mode</div>
</section>

<section class="phone position-relative d-flex flex-column">
  <header class="statusbar d-flex align-items-center">
    <svg width="95" height="18.700"><use href="#i-left"/></svg>
    <svg class="ms-auto" width="73.600" height="18.700"><use href="#i-right"/></svg><span class="clock">17:38</span>
  </header>
  <div class="screen d-flex">
    <div class="drawer">
      <div class="drawer-head d-flex align-items-center">
        <svg width="12" height="20"><use href="#i-back"/></svg>
        <svg class="gear" width="41" height="42"><use href="#i-gear"/></svg>
        <div class="modes ms-auto d-flex">
          <div class="mode-off d-flex align-items-center justify-content-center"><svg class="flex-shrink-0" width="51" height="51"><use href="#i-map"/></svg></div>
          <div class="mode-on d-flex align-items-center justify-content-center"><svg class="flex-shrink-0" width="51" height="51"><use href="#i-pen"/></svg></div>
        </div>
      </div>
      <div class="tree">
        <div class="tree-row d-flex align-items-center"><div class="caret"></div><svg class="ico" height="24"><use href="#i-poly"/></svg><span class="picked">training-project</span></div>
        <div class="tree-row d-flex align-items-center"><div class="caret"></div><svg class="ico" height="24"><use href="#i-raster"/></svg><span>OpenStreetMap</span></div>
        <div class="tree-row d-flex align-items-center"><div class="caret d-flex"><svg width="8" height="10"><use href="#i-caret"/></svg></div><svg class="ico" height="24"><use href="#i-group"/></svg><span class="fw-bold">tables</span></div>
        <div class="tree-row child d-flex align-items-center"><div class="caret"></div><svg class="ico" height="24"><use href="#i-table"/></svg><span>fruit-tree</span></div>
        <div class="tree-row child d-flex align-items-center"><div class="caret"></div><svg class="ico" height="24"><use href="#i-table"/></svg><span>crop-type</span></div>
      </div>
    </div>
    <div class="strip position-relative">
      <div class="mapbox position-relative">
        <svg width="87" height="896" viewBox="1305 132 261 2688"><use href="#tonga"/></svg>
        <div class="foot-shadow position-absolute"></div>
        <div class="fab fab-go position-absolute at-top at-right d-flex align-items-center justify-content-center"><svg width="40" height="40"><use href="#i-search"/></svg></div>
        <div class="fabs position-absolute at-right d-flex flex-column">
          <div class="fab d-flex align-items-center justify-content-center"><svg width="37" height="37"><use href="#i-frame"/></svg></div>
          <div class="fab d-flex align-items-center justify-content-center"><svg width="37" height="37"><use href="#i-gps"/></svg></div>
          <div class="fab d-flex align-items-center justify-content-center"><svg width="24" height="24"><use href="#i-plus"/></svg></div>
        </div>
      </div>
      <div class="info bg-white"><div class="cellx"></div><div class="cellx tint d-flex align-items-center"><span>0 m</span></div><div class="cellx"></div></div>
      <div class="shade position-absolute"></div>
    </div>
  </div>
  <footer class="navkeys"><svg width="521" height="58"><use href="#i-keys"/></svg></footer>
  <div class="frame f2 position-absolute"></div>
  <div class="note n2 position-absolute">Select layer to 
edit / add features
to - make sure it
 is highlighted</div>
</section>

<section class="phone position-relative d-flex flex-column">
  <header class="statusbar d-flex align-items-center">
    <svg width="95" height="18.700"><use href="#i-left"/></svg>
    <svg class="ms-auto" width="73.600" height="18.700"><use href="#i-right"/></svg><span class="clock">17:38</span>
  </header>
  <div class="screen">
    <div class="mapbox position-relative">
      <svg width="521" height="896" viewBox="3 132 1563 2688"><use href="#tonga"/></svg>
      <div class="foot-shadow position-absolute"></div>
      <svg class="cross position-absolute" width="73" height="73" viewBox="0 0 73 73" fill="none"><g stroke="#dfe8ea" stroke-opacity=".7" stroke-width="4"><circle cx="36.500" cy="36.500" r="34"/><path d="M36 13V60M13 36H60"/></g><g stroke="#1f3747" stroke-width="1.600"><circle cx="36.500" cy="36.500" r="34"/><path d="M36 13V60M13 36H60"/></g></svg>
      <div class="coords position-absolute">Lon: -175.18314<br>Lat: -21.14714</div>
      <div class="scalelab position-absolute">0.0071 deg</div>
      <svg class="scalebar position-absolute" width="129" height="17" viewBox="0 0 129 17" fill="none"><path d="M2.500 1V13.500H126V1" stroke="#fff" stroke-opacity=".8" stroke-width="5"/><path d="M2.500 2V13H126V2" stroke="#222" stroke-width="2.800"/></svg>
      <div class="fab position-absolute at-top at-left d-flex align-items-center justify-content-center"><svg width="31" height="22" viewBox="0 0 31 22"><path d="M0 2.200H31M0 10.700H31M0 19.200H31" stroke="#fff" stroke-width="3.700"/></svg></div>
      <div class="fab fab-go position-absolute at-top at-right d-flex align-items-center justify-content-center"><svg width="40" height="40"><use href="#i-search"/></svg></div>
      <div class="fabs position-absolute at-right d-flex flex-column">
        <div class="fab d-flex align-items-center justify-content-center"><svg width="37" height="37"><use href="#i-frame"/></svg></div>
        <div class="fab d-flex align-items-center justify-content-center"><svg width="37" height="37"><use href="#i-gps"/></svg></div>
        <div class="fab d-flex align-items-center justify-content-center"><svg width="24" height="24"><use href="#i-plus"/></svg></div>
      </div>
    </div>
    <div class="info bg-white">
      <div class="d-flex"><div class="cellx tint d-flex align-items-center">Lat.: -31.99478</div><div class="cellx d-flex align-items-center">Speed: N/A</div></div>
      <div class="d-flex"><div class="cellx d-flex align-items-center">Lon.: 115.75448</div><div class="cellx tint d-flex align-items-center">H. Accuracy: 14.40 m</div></div>
      <div class="d-flex"><div class="cellx tint d-flex align-items-center">Altitude: -11.80 m</div><div class="cellx d-flex align-items-center">V. Accuracy: 7.30 m</div></div>
    </div>
  </div>
  <footer class="navkeys"><svg width="521" height="58"><use href="#i-keys"/></svg></footer>
  <div class="frame f3 position-absolute"></div>
  <div class="note n3 position-absolute">Tap and hold this
button to make the
GPS follow you</div>
</section>

</main>
<script src="https://cdn.jsdelivr.net/npm/bootstrap@5.3.0/dist/js/bootstrap.bundle.min.js"></script>
</body>
</html>
